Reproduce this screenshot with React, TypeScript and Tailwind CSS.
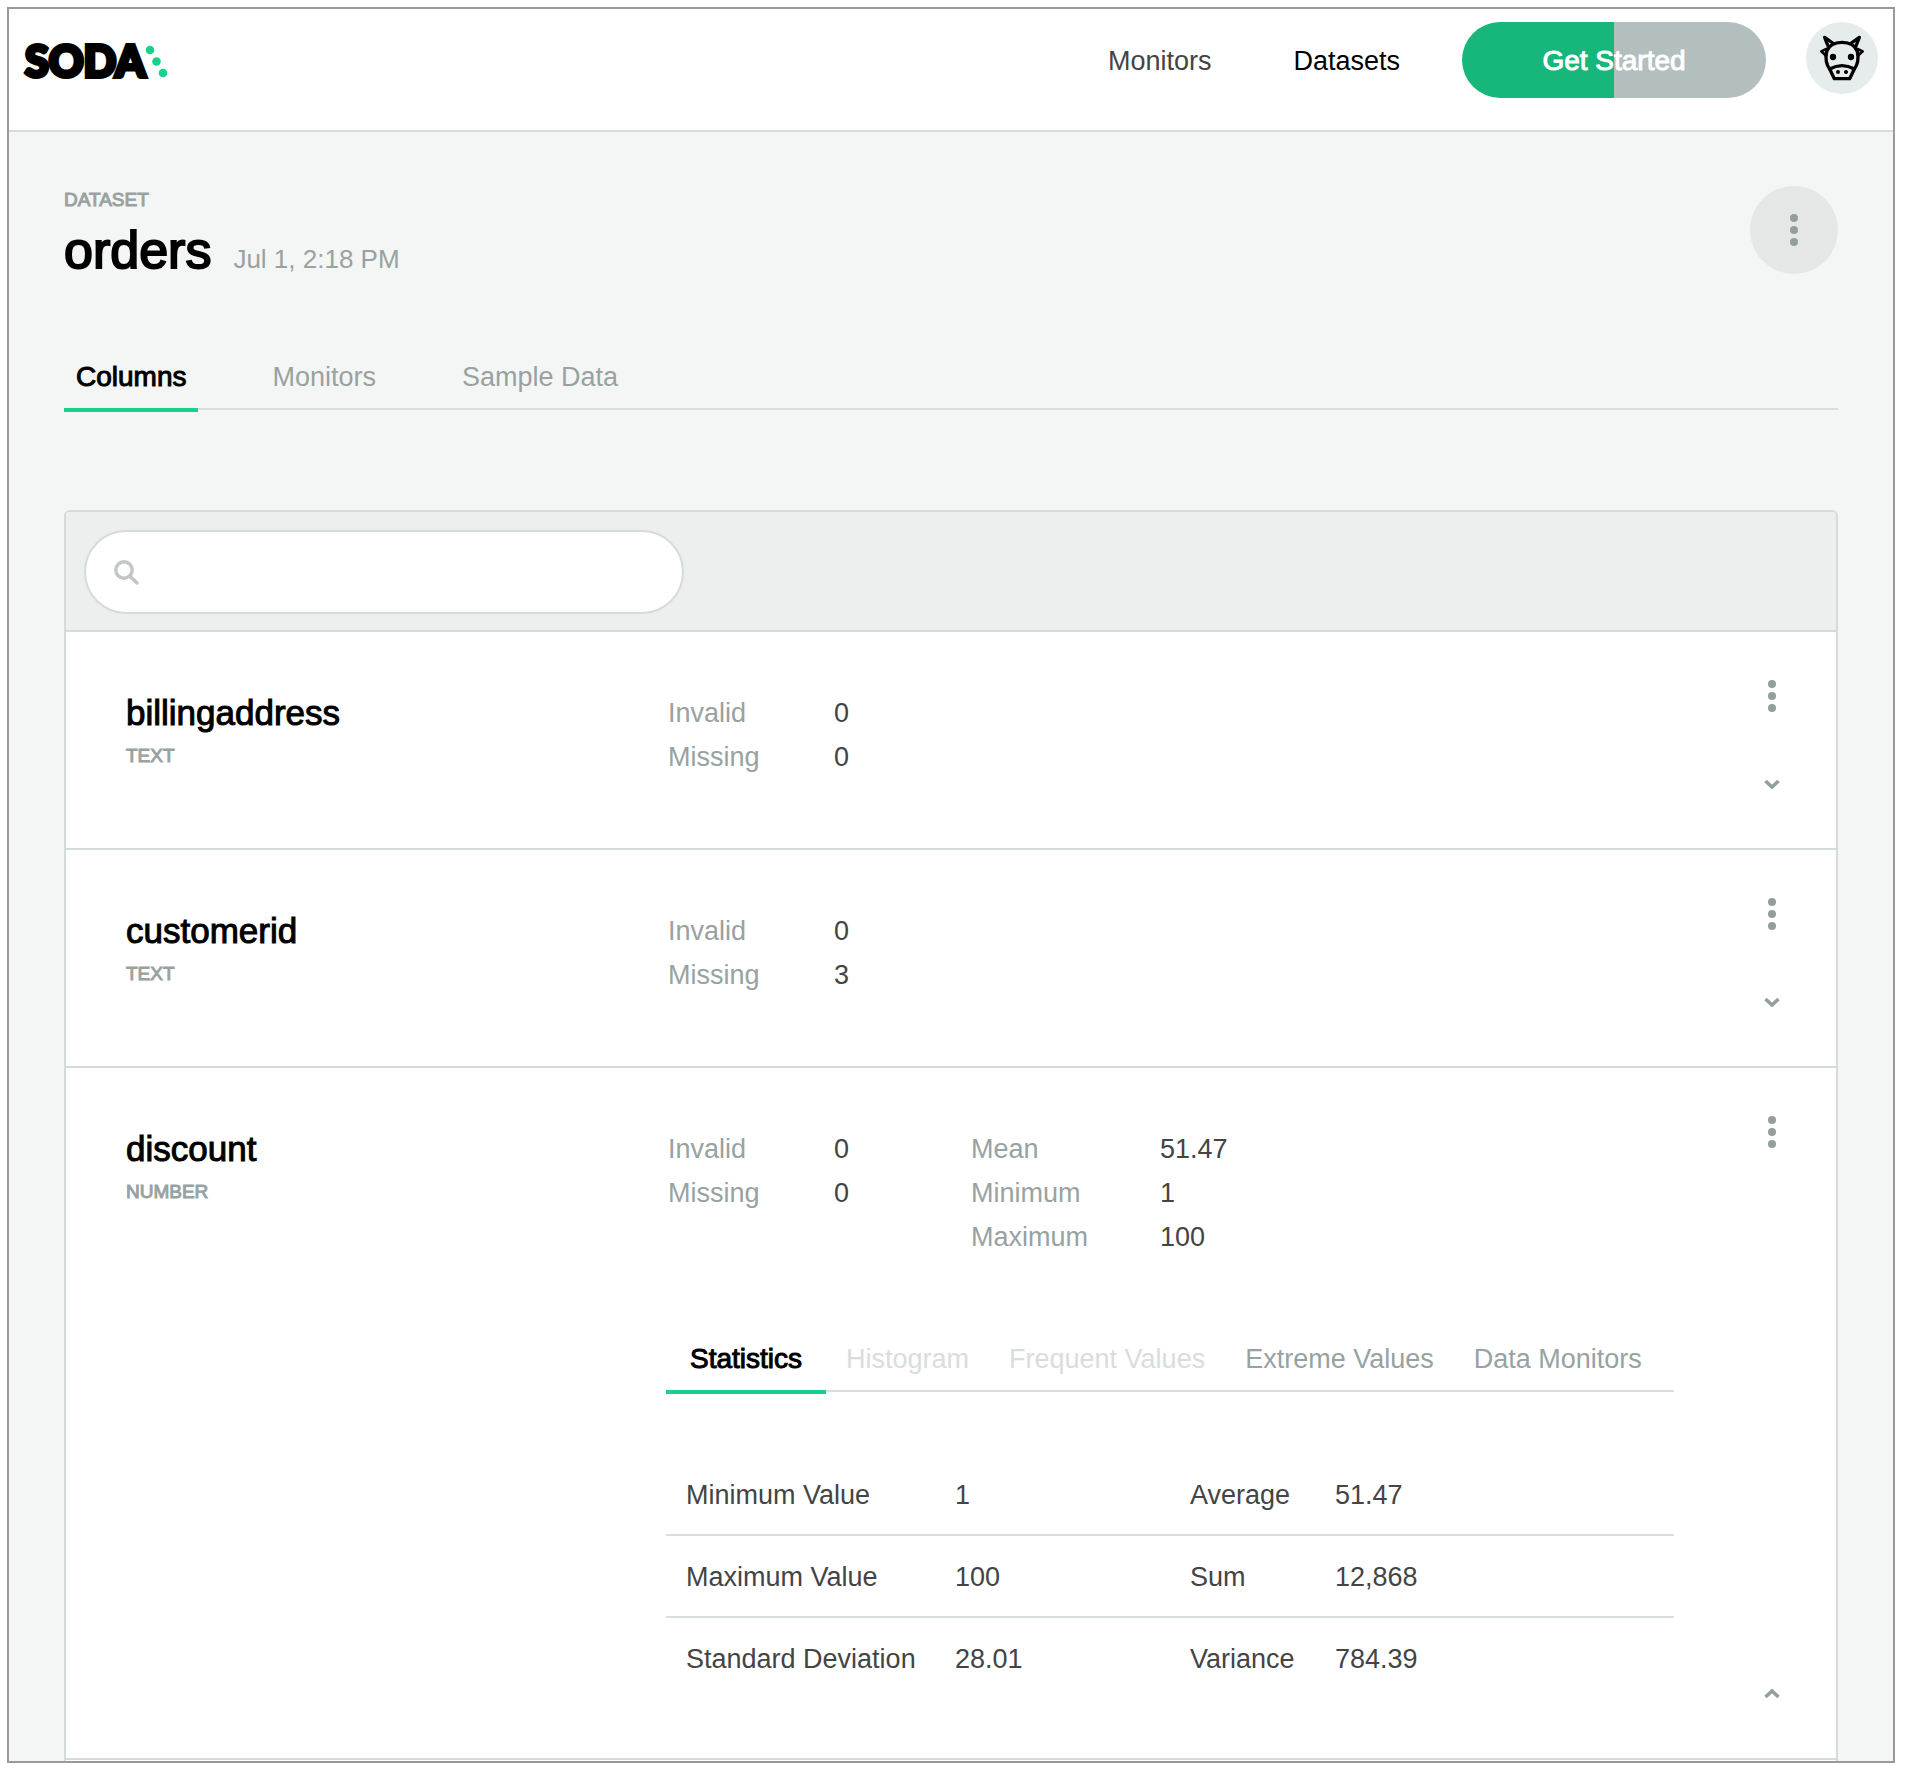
import { useState } from "react";

type Stat = { label: string; value: string };

type Column = {
  name: string;
  type: string;
  quality: Stat[];
  summary?: Stat[];
  details?: [Stat, Stat][];
};

type Tab = { label: string; disabled?: boolean };

const columns: Column[] = [
  {
    name: "billingaddress",
    type: "TEXT",
    quality: [
      { label: "Invalid", value: "0" },
      { label: "Missing", value: "0" },
    ],
  },
  {
    name: "customerid",
    type: "TEXT",
    quality: [
      { label: "Invalid", value: "0" },
      { label: "Missing", value: "3" },
    ],
  },
  {
    name: "discount",
    type: "NUMBER",
    quality: [
      { label: "Invalid", value: "0" },
      { label: "Missing", value: "0" },
    ],
    summary: [
      { label: "Mean", value: "51.47" },
      { label: "Minimum", value: "1" },
      { label: "Maximum", value: "100" },
    ],
    details: [
      [
        { label: "Minimum Value", value: "1" },
        { label: "Average", value: "51.47" },
      ],
      [
        { label: "Maximum Value", value: "100" },
        { label: "Sum", value: "12,868" },
      ],
      [
        { label: "Standard Deviation", value: "28.01" },
        { label: "Variance", value: "784.39" },
      ],
    ],
  },
];

const pageTabs: Tab[] = [{ label: "Columns" }, { label: "Monitors" }, { label: "Sample Data" }];

const detailTabs: Tab[] = [
  { label: "Statistics" },
  { label: "Histogram", disabled: true },
  { label: "Frequent Values", disabled: true },
  { label: "Extreme Values" },
  { label: "Data Monitors" },
];

function Logo() {
  return (
    <svg width="146" height="60" viewBox="0 0 146 60" role="img" aria-label="Soda">
      <text
        x="2"
        y="46"
        fontFamily="Lato, sans-serif"
        fontWeight="900"
        fontSize="43"
        fill="#000"
        stroke="#000"
        strokeWidth="4"
      >
        SODA
      </text>
      <g fill="#17d28b">
        <circle cx="127" cy="19" r="4.3" />
        <circle cx="133.5" cy="30.5" r="4.3" />
        <circle cx="140" cy="42" r="4.3" />
      </g>
    </svg>
  );
}

function CowIcon() {
  return (
    <svg
      className="size-full"
      viewBox="0 0 216 216"
      fill="none"
      stroke="#000"
      strokeWidth="10"
      strokeLinecap="round"
      strokeLinejoin="round"
      aria-hidden="true"
    >
      <path d="M71 141C61 128 58 108 62 88C69 69 88 61 108 61C128 61 147 69 154 88C158 108 155 128 145 141" />
      <path d="M71 141L85 170H131L145 141Q108 121 71 141Z" />
      <path d="M66 72L56 46L80 63M150 72L160 46L136 63" />
      <path d="M61 81L46 88L60 101M155 81L170 88L156 101" strokeWidth="8" />
      <g fill="#000" stroke="none">
        <circle cx="81" cy="105" r="9.5" />
        <circle cx="135" cy="105" r="9.5" />
        <circle cx="96" cy="150" r="6" />
        <circle cx="120" cy="150" r="6" />
      </g>
    </svg>
  );
}

function Dots() {
  return (
    <span className="flex flex-col items-center gap-1">
      <span className="size-2 rounded-full bg-[#939e9d]" />
      <span className="size-2 rounded-full bg-[#939e9d]" />
      <span className="size-2 rounded-full bg-[#939e9d]" />
    </span>
  );
}

function Chevron({ up }: { up: boolean }) {
  return (
    <svg width="16" height="10" viewBox="0 0 16 10" fill="none" stroke="#939e9d" strokeWidth="3.6" aria-hidden="true">
      <path d={up ? "M1.5 8L8 2L14.5 8" : "M1.5 2L8 8L14.5 2"} />
    </svg>
  );
}

function TabBar({
  tabs,
  label,
  listClass,
  tabClass,
}: {
  tabs: Tab[];
  label: string;
  listClass: string;
  tabClass: string;
}) {
  const [active, setActive] = useState(tabs[0].label);
  return (
    <div role="tablist" aria-label={label} className={`flex border-b-2 border-[#d9dddc] ${listClass}`}>
      {tabs.map((tab) => {
        const selected = tab.label === active;
        const tone = selected
          ? "border-[#17d28b] text-[28px] text-black [-webkit-text-stroke:1px]"
          : tab.disabled
            ? "border-transparent text-[27px] text-[#d9dddc]"
            : "border-transparent text-[27px] text-[#98a2a1]";
        return (
          <button
            key={tab.label}
            type="button"
            role="tab"
            aria-selected={selected}
            disabled={tab.disabled}
            onClick={() => setActive(tab.label)}
            className={`-mb-1 whitespace-nowrap border-b-4 pb-[9px] leading-[44px] ${tone} ${tabClass}`}
          >
            {tab.label}
          </button>
        );
      })}
    </div>
  );
}

function StatList({ stats, labelClass }: { stats: Stat[]; labelClass: string }) {
  return (
    <dl className="pl-0.5 text-[27px] leading-[44px]">
      {stats.map((stat) => (
        <div key={stat.label} className="flex">
          <dt className={`text-[#98a2a1] ${labelClass}`}>{stat.label}</dt>
          <dd className="text-[#444]">{stat.value}</dd>
        </div>
      ))}
    </dl>
  );
}

function DetailTable({ rows }: { rows: [Stat, Stat][] }) {
  return (
    <table className="mt-[62px] w-full table-fixed text-left text-[27px] leading-[44px] text-[#444]">
      <colgroup>
        <col className="w-[269px]" />
        <col className="w-[235px]" />
        <col className="w-[145px]" />
        <col />
      </colgroup>
      <tbody>
        {rows.map(([left, right]) => (
          <tr key={left.label} className="border-b-2 border-[#d9dddc] last:border-b-0">
            <th scope="row" className="whitespace-nowrap pt-[19px] pb-[17px] pl-5 font-normal">
              {left.label}
            </th>
            <td className="pt-[19px] pb-[17px] pl-5">{left.value}</td>
            <th scope="row" className="pt-[19px] pb-[17px] pl-5 font-normal">
              {right.label}
            </th>
            <td className="pt-[19px] pb-[17px] pl-5">{right.value}</td>
          </tr>
        ))}
      </tbody>
    </table>
  );
}

function ColumnRow({ column }: { column: Column }) {
  const [open, setOpen] = useState(Boolean(column.details));
  return (
    <li className="flex min-h-[218px] border-b-2 border-[#d5dbda] pl-[60px]">
      <div className="w-[540px] shrink-0 pt-[59px]">
        <h2 className="text-[35px] leading-[44px] text-black [-webkit-text-stroke:1px]">{column.name}</h2>
        <p className="mt-[9px] text-[19px] leading-6 text-[#98a2a1] [-webkit-text-stroke:1px]">{column.type}</p>
      </div>
      <div className="min-w-0 grow pt-[59px] pb-[60px]">
        <div className="flex">
          <div className="w-[303px]">
            <StatList stats={column.quality} labelClass="w-[166px]" />
          </div>
          {column.summary && <StatList stats={column.summary} labelClass="w-[189px]" />}
        </div>
        {open && column.details && (
          <div>
            <TabBar
              tabs={detailTabs}
              label={`${column.name} details`}
              listClass="mt-[78px]"
              tabClass="px-5 first:w-[160px]"
            />
            <DetailTable rows={column.details} />
          </div>
        )}
      </div>
      <div className="flex w-[162px] shrink-0 flex-col items-end justify-between pt-9 pr-11 pb-11">
        <button
          type="button"
          aria-label={`${column.name} options`}
          className="flex h-14 w-10 items-center justify-center"
        >
          <Dots />
        </button>
        <button
          type="button"
          aria-label={open ? `Collapse ${column.name}` : `Expand ${column.name}`}
          aria-expanded={open}
          onClick={() => setOpen(!open)}
          className="flex size-10 items-center justify-center"
        >
          <Chevron up={open} />
        </button>
      </div>
    </li>
  );
}

function Header() {
  return (
    <header className="flex items-start justify-between border-b-2 border-[#d9dbda] bg-white pt-[13px] pr-[15px] pb-8 pl-[14px]">
      <a href="#home" className="mt-[9px] block">
        <Logo />
      </a>
      <div className="flex items-start">
        <nav className="flex h-[76px] items-center gap-[82px] pt-0.5 pr-[62px] text-[27px] leading-[44px]">
          <a href="#monitors" className="text-[#444]">
            Monitors
          </a>
          <a href="#datasets" aria-current="page" className="text-black">
            Datasets
          </a>
        </nav>
        <button
          type="button"
          className="h-[76px] w-[304px] rounded-full bg-linear-to-r from-[#17b67a] from-50% to-[#b2bfbe] to-50% pt-0.5 text-[28px] leading-[44px] text-white [-webkit-text-stroke:1px]"
        >
          Get Started
        </button>
        <button type="button" aria-label="Account" className="ml-10 size-[72px] rounded-full bg-[#e6eceb]">
          <CowIcon />
        </button>
      </div>
    </header>
  );
}

export default function App() {
  return (
    <div className="bg-white pt-[7px] pr-[13px] pb-[11px] pl-[7px] font-['Liberation_Sans',Arial,sans-serif]">
      <div className="border-2 border-[#999] bg-[#f4f6f5]">
        <Header />
        <main className="px-[55px] pt-[54px]">
          <div className="flex items-start justify-between">
            <div>
              <p className="text-[19px] leading-7 text-[#98a2a1] [-webkit-text-stroke:1px]">DATASET</p>
              <div className="mt-[6px] flex items-baseline gap-[22px]">
                <h1 className="text-[52px] leading-[60px] text-black [-webkit-text-stroke:2px]">orders</h1>
                <span className="text-[26px] text-[#98a2a1]">Jul 1, 2:18 PM</span>
              </div>
            </div>
            <button
              type="button"
              aria-label="Dataset options"
              className="flex size-[88px] items-center justify-center rounded-full bg-[#e5e7e6]"
            >
              <Dots />
            </button>
          </div>

          <TabBar tabs={pageTabs} label="Dataset" listClass="mt-[75px] gap-[62px]" tabClass="px-3" />

          <section className="mt-[100px] rounded-t-md border-2 border-b-0 border-[#d5dbda] bg-white pb-px">
            <div className="rounded-t-sm border-b-2 border-[#d5dbda] bg-[#edefee] px-[18px] pt-[18px] pb-4">
              <label className="flex h-[84px] w-[600px] max-w-full items-center gap-4 rounded-full border-2 border-[#d5dbda] bg-white px-7">
                <svg
                  width="25"
                  height="25"
                  viewBox="0 0 25 25"
                  fill="none"
                  stroke="#c2c7c6"
                  strokeWidth="3.5"
                  strokeLinecap="round"
                  aria-hidden="true"
                >
                  <circle cx="10" cy="10" r="8.2" />
                  <path d="M16 16.2L23 23" />
                </svg>
                <input
                  type="search"
                  aria-label="Search columns"
                  className="min-w-0 grow bg-transparent text-[27px] text-[#444] outline-none"
                />
              </label>
            </div>
            <ul>
              {columns.map((column) => (
                <ColumnRow key={column.name} column={column} />
              ))}
            </ul>
          </section>
        </main>
      </div>
    </div>
  );
}
